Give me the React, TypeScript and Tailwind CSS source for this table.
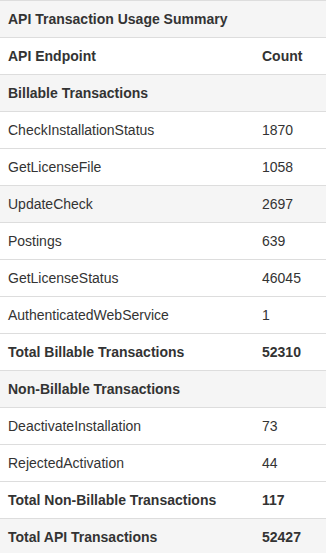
import React from 'react';

type Row = {
  name: string;
  count?: number;
  bold?: boolean;
  shaded?: boolean;
  span?: boolean;
};

const rows: Row[] = [
  { name: 'Billable Transactions', bold: true, shaded: true, span: true },
  { name: 'CheckInstallationStatus', count: 1870 },
  { name: 'GetLicenseFile', count: 1058 },
  { name: 'UpdateCheck', count: 2697, shaded: true },
  { name: 'Postings', count: 639 },
  { name: 'GetLicenseStatus', count: 46045 },
  { name: 'AuthenticatedWebService', count: 1 },
  { name: 'Total Billable Transactions', count: 52310, bold: true },
  { name: 'Non-Billable Transactions', bold: true, shaded: true, span: true },
  { name: 'DeactivateInstallation', count: 73 },
  { name: 'RejectedActivation', count: 44 },
  { name: 'Total Non-Billable Transactions', count: 117, bold: true },
  { name: 'Total API Transactions', count: 52427, bold: true, shaded: true },
];

const App: React.FC = () => {
  return (
    <div className="w-[326px] bg-white text-[#333] text-[14px] leading-[20px] font-['Liberation_Sans',Arial,sans-serif]">
      <table className="w-full border-collapse">
        <thead>
          <tr className="bg-[#f5f5f5]">
            <th colSpan={2} className="border-t border-[#ddd] p-2 text-left font-bold">
              API Transaction Usage Summary
            </th>
          </tr>
          <tr>
            <th className="w-[254px] border-t border-[#ddd] p-2 text-left font-bold">API Endpoint</th>
            <th className="border-t border-[#ddd] p-2 text-left font-bold">Count</th>
          </tr>
        </thead>
        <tbody>
          {rows.map((row) => (
            <tr key={row.name} className={row.shaded ? 'bg-[#f5f5f5]' : 'bg-white'}>
              {row.span ? (
                <td colSpan={2} className="border-t border-[#ddd] p-2 font-bold">
                  {row.name}
                </td>
              ) : (
                <>
                  <td className={`border-t border-[#ddd] p-2 ${row.bold ? 'font-bold' : ''}`}>{row.name}</td>
                  <td className={`border-t border-[#ddd] p-2 ${row.bold ? 'font-bold' : ''}`}>{row.count}</td>
                </>
              )}
            </tr>
          ))}
        </tbody>
      </table>
    </div>
  );
};

export default App;
